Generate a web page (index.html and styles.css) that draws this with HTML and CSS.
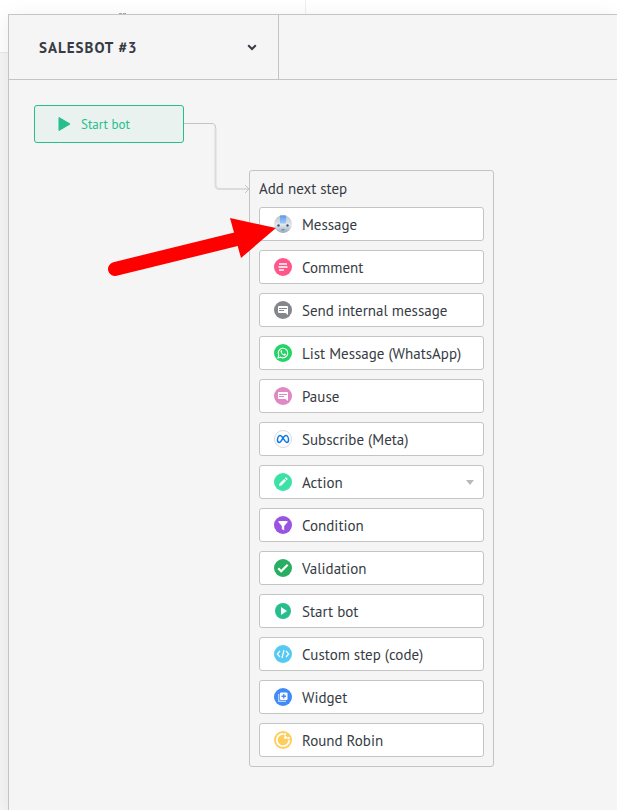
FILE: index.html
```
<!DOCTYPE html>
<html lang="en">

<head>
  <meta charset="utf-8">
  <meta name="viewport" content="width=device-width, initial-scale=1.0">
  <title>Salesbot #3</title>
  <link rel="stylesheet" href="styles.css">
</head>

<body>
  <div class="page-top">
    <div class="page-search"><span class="page-dots"></span></div>
  </div>

  <main class="modal">
    <header class="modal-header">
      <button class="bot-name" type="button">
        <span>SALESBOT #3</span>
        <svg width="10" height="7" viewBox="0 0 10 7"><path d="M1.2 1.2 5 5l3.800-3.800" fill="none" stroke="#363b44" stroke-width="2"/></svg>
      </button>
    </header>

    <div class="canvas">
      <svg class="connector" width="66" height="74" viewBox="0 0 66 74">
        <path d="M31.500 8V65Q31.500 69 36 69H64" fill="none" stroke="#dcdcdc" stroke-width="2"/>
        <path d="M0 3.500H28Q31.500 3.500 31.500 8" fill="none" stroke="#c4c4c4"/>
        <path d="M61 65l4 4-4 4" fill="none" stroke="#c4c4c4"/>
      </svg>

      <button class="start-node" type="button">
        <svg width="13" height="14" viewBox="0 0 13 14"><path d="M1 0.500 12 7 1 13.500z" fill="#27be8e" stroke="#27be8e" stroke-linejoin="round"/></svg>
        Start bot
      </button>

      <section class="steps">
        <h2 class="steps-title">Add next step</h2>
        <button class="step" type="button">
          <svg class="icon" viewBox="0 0 18 18">
            <defs>
              <linearGradient id="face" x2="0" y2="1"><stop offset="0" stop-color="#b4c0cc"/><stop offset=".55" stop-color="#e3e9ee"/><stop offset="1" stop-color="#93a8bb"/></linearGradient>
              <linearGradient id="crest" x2="0" y2="1"><stop offset="0" stop-color="#5b9bee"/><stop offset="1" stop-color="#a3cafa"/></linearGradient>
            </defs>
            <circle cx="9" cy="9" r="9" fill="url(#face)"/>
            <path d="M6 .5h6v7q0 1-1 1H7q-1 0-1-1z" fill="url(#crest)"/>
            <circle cx="4.500" cy="10.500" r="1.200" fill="#42566a"/><circle cx="13.500" cy="10.500" r="1.200" fill="#42566a"/>
            <path d="M7 14.200h4l-1 1.300H8z" fill="#71818f"/>
          </svg>
          Message
        </button>
        <button class="step" type="button">
          <svg class="icon" viewBox="0 0 18 18"><circle cx="9" cy="9" r="9" fill="#ff5589"/><path d="M5 6h8M4.500 9h9M5 12h5" stroke="#fff" stroke-width="1.500"/></svg>
          Comment
        </button>
        <button class="step" type="button">
          <svg class="icon" viewBox="0 0 18 18"><circle cx="9" cy="9" r="9" fill="#83868d"/><path d="M5 5h8q1 0 1 1v8l-2.500-2H5q-1 0-1-1V6q0-1 1-1z" fill="#fff"/><path d="M5 7.500h8M5 9.500h5" stroke="#83868d"/></svg>
          Send internal message
        </button>
        <button class="step" type="button">
          <svg class="icon" viewBox="0 0 18 18">
            <circle cx="9" cy="9" r="9" fill="#25d366"/>
            <path d="M4 14l.8-2.700A4.800 4.800 0 1 1 6.700 13.200z" fill="none" stroke="#fff" stroke-width="1.100"/>
            <path d="M7 6.300c-1 .8-.5 2.200.8 3.600s3 2.200 3.900 1.100c.5-.7.200-.9-.9-1.400-.5-.2-.6.800-1 .7-.8-.2-1.900-1.300-2-1.900 0-.3.600-.5.400-.9-.4-.9-.6-1.600-1.200-1.200z" fill="#fff"/>
          </svg>
          List Message (WhatsApp)
        </button>
        <button class="step" type="button">
          <svg class="icon" viewBox="0 0 18 18"><circle cx="9" cy="9" r="9" fill="#df88c4"/><path d="M5 5h8q1 0 1 1v8l-2.500-2H5q-1 0-1-1V6q0-1 1-1z" fill="#fff"/><path d="M5 7.500h8M5 9.500h5" stroke="#df88c4"/></svg>
          Pause
        </button>
        <button class="step" type="button">
          <svg class="icon" viewBox="0 0 18 18">
            <circle cx="9" cy="9" r="8.500" fill="#fff" stroke="#dcd5df"/>
            <path d="M9 8C7.800 6.200 7 5.600 6 5.600 4.500 5.600 3.500 7.900 3.500 10c0 1.600.6 2.400 1.600 2.400C6.800 12.400 8 9.700 9 8s1.900-2.400 3-2.400c1.500 0 2.500 2.300 2.500 4.400 0 1.600-.6 2.400-1.600 2.400C11.200 12.400 10.100 9.700 9 8z" fill="none" stroke="#0b78e8" stroke-width="1.500"/>
          </svg>
          Subscribe (Meta)
        </button>
        <button class="step" type="button">
          <svg class="icon" viewBox="0 0 18 18"><circle cx="9" cy="9" r="9" fill="#3be2a6"/><path d="M5 13l.5-2.400 4.700-4.700 1.900 1.900-4.700 4.700zM10.800 5.300l.7-.7q.5-.4 1 0l.9.9q.4.5 0 1l-.7.700z" fill="#fff"/></svg>
          Action
          <svg class="caret" width="8" height="5" viewBox="0 0 8 5"><path d="M0 0h8L4 5z" fill="#b9b9b9"/></svg>
        </button>
        <button class="step" type="button">
          <svg class="icon" viewBox="0 0 18 18"><circle cx="9" cy="9" r="9" fill="#9a52e0"/><path d="M4.500 5h9v1.200l-3.300 3.700v4.600l-2.400-1.400V9.900L4.500 6.200z" fill="#fff"/></svg>
          Condition
        </button>
        <button class="step" type="button">
          <svg class="icon" viewBox="0 0 18 18"><circle cx="9" cy="9" r="9" fill="#27ae60"/><path d="M4.200 9.200l3 3 6.500-6.400" fill="none" stroke="#fff" stroke-width="2.200"/></svg>
          Validation
        </button>
        <button class="step" type="button">
          <svg class="icon" viewBox="0 0 18 18"><circle cx="9" cy="9" r="8" fill="#27be8e"/><path d="M7 5l6 4-6 4z" fill="#fff"/></svg>
          Start bot
        </button>
        <button class="step" type="button">
          <svg class="icon" viewBox="0 0 18 18"><circle cx="9" cy="9" r="9" fill="#55c9f2"/><path d="M6 6 3.300 9 6 12M12 6l2.700 3L12 12M10 5 8 13" fill="none" stroke="#fff" stroke-width="1.200"/></svg>
          Custom step (code)
        </button>
        <button class="step" type="button">
          <svg class="icon" viewBox="0 0 18 18"><circle cx="9" cy="9" r="9" fill="#408bf7"/><path d="M4.700 6v7.300H12" fill="none" stroke="#b9d5ff" stroke-width="1.300"/><rect x="6" y="4.500" width="7.500" height="7.500" rx="1" fill="#fff"/><path d="M9.750 6v4.500M7.500 8.250H12" stroke="#408bf7" stroke-width="1.300"/></svg>
          Widget
        </button>
        <button class="step" type="button">
          <svg class="icon" viewBox="0 0 18 18">
            <circle cx="9" cy="9" r="9" fill="#ffcd5c"/>
            <path d="M9 2.800A6.200 6.200 0 1 0 15.200 9" fill="none" stroke="#fff" stroke-width="1.800"/>
            <circle cx="10.800" cy="3.300" r="1.300" fill="#fff"/>
            <circle cx="14.500" cy="7" r="1.300" fill="#fff"/>
            <circle cx="11.500" cy="6.500" r="1.500" fill="#fff"/>
          </svg>
          Round Robin
        </button>
      </section>

      <svg class="pointer" width="172" height="62" viewBox="0 0 172 62">
        <path d="M10 53 132 23" stroke="#f00" stroke-width="14" stroke-linecap="round"/>
        <path d="M125 2 171 12 136 42z" fill="#f00"/>
      </svg>
    </div>
  </main>
</body>

</html>
```
FILE: styles.css
```
html,
body {
  margin: 0;
  height: 100%;
}

body {
  background-color: #f5f5f5;
  color: #363b44;
  font-family: "PT Sans", "Noto Sans", sans-serif;
  font-size: 15px;
}

button {
  margin: 0;
  font: inherit;
  color: inherit;
  text-align: left;
  cursor: pointer;
}

.page-top {
  height: 52px;
  background-color: #fff;
  border-bottom: 1px solid #e8e8e8;
}

.page-search {
  box-sizing: border-box;
  width: 306px;
  height: 100%;
  border-right: 1px solid #efefef;
}

.page-dots {
  display: block;
  width: 7px;
  height: 1px;
  padding-top: 13px;
  margin-left: 119px;
  background: linear-gradient(90deg, #aaa 3px, #fff 3px, #fff 4px, #aaa 4px) bottom / 7px 1px no-repeat;
}

/* the editor lies over the page */
.modal {
  position: absolute;
  top: 14px;
  right: 0;
  bottom: 0;
  left: 8px;
  display: flex;
  flex-direction: column;
  background-color: #f5f5f5;
  border: solid #c4c4c4;
  border-width: 1px 0 0 1px;
  box-shadow: 0 4px 20px rgba(0, 0, 0, .08);
}

.modal-header {
  display: flex;
  height: 64px;
  border-bottom: 1px solid #c4c4c4;
}

.bot-name {
  box-sizing: border-box;
  display: flex;
  align-items: center;
  justify-content: space-between;
  width: 270px;
  padding: 0 21px 0 30px;
  border: 0;
  border-right: 1px solid #c4c4c4;
  background: none;
  font-weight: bold;
  letter-spacing: 1px;
}

.canvas {
  position: relative;
  flex: 1;
}

.connector {
  position: absolute;
  top: 40px;
  left: 175px;
}

.start-node {
  position: absolute;
  top: 25px;
  left: 25px;
  display: flex;
  align-items: center;
  gap: 10px;
  width: 150px;
  height: 38px;
  padding: 0 23px;
  border: 1px solid #27be8e;
  border-radius: 3px;
  background-color: #e9f2ef;
  color: #27be8e;
  font-size: 13px;
}

.steps {
  position: absolute;
  top: 90px;
  left: 240px;
  box-sizing: border-box;
  display: flex;
  flex-direction: column;
  gap: 9px;
  width: 245px;
  padding: 9px;
  border: 1px solid #c4c4c4;
  border-radius: 3px;
}

.steps-title {
  margin: 0;
  font-size: 15px;
  font-weight: normal;
  line-height: 18px;
}

.step {
  display: flex;
  align-items: center;
  gap: 10px;
  height: 34px;
  padding: 0 9px 0 14px;
  border: 1px solid #c4c4c4;
  border-radius: 3px;
  background-color: #fff;
  white-space: nowrap;
}

.icon {
  flex: none;
  width: 18px;
  height: 18px;
}

.caret {
  margin-left: auto;
}

.pointer {
  position: absolute;
  top: 136px;
  left: 96px;
  pointer-events: none;
}
```
